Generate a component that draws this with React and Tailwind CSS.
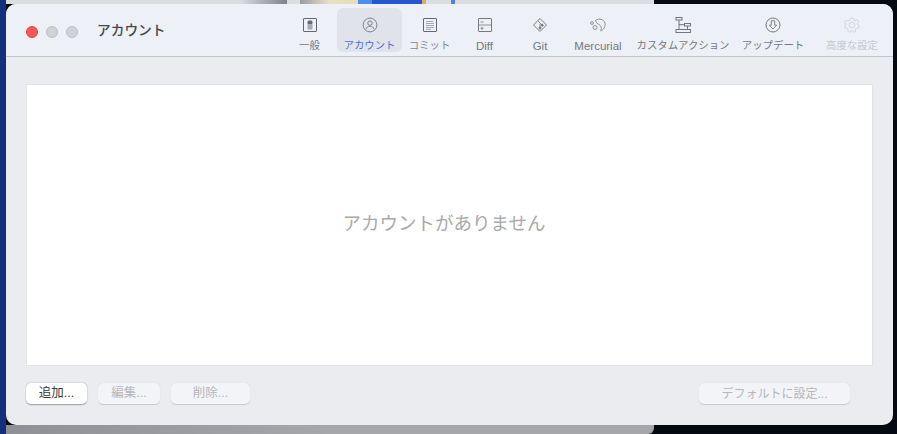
import React from "react";

const font = { fontFamily: '"Liberation Sans", "Noto Sans CJK JP", sans-serif' };

const GeneralIcon = () => (
  <svg width="16" height="16" viewBox="0 0 16 16" fill="none">
    <rect x="1.500" y="1.500" width="13" height="13" rx="0.5" stroke="#66686c" />
    <rect x="5.500" y="3.500" width="5" height="4" rx="1.500" fill="#66686c" />
    <rect x="5.500" y="7" width="5" height="5.500" rx="1" fill="#a8aaae" />
  </svg>
);

const AccountIcon = () => (
  <svg width="16" height="16" viewBox="0 0 16 16" fill="none" stroke="#77797e" strokeWidth="0.9">
    <circle cx="8" cy="8" r="6.900" />
    <circle cx="8" cy="6.200" r="2.200" />
    <path d="M4 12.200c.4-2 2-3 4-3s3.600 1 4 3" />
  </svg>
);

const CommitIcon = () => (
  <svg width="16" height="16" viewBox="0 0 16 16" fill="none">
    <rect x="1.500" y="1.500" width="13" height="13" rx="0.5" stroke="#66686c" />
    <path d="M4 4.500h7M4 6.500h8M4 8.500h8M4 10.500h8M4 12.300h5" stroke="#a8aaae" />
  </svg>
);

const DiffIcon = () => (
  <svg width="16" height="16" viewBox="0 0 16 16" fill="none" stroke="#77797e">
    <rect x="1.500" y="1.500" width="13" height="13" rx="0.5" />
    <path d="M1.500 8h13M3.500 5h3M3.500 11.300h3M5 9.800v3" strokeWidth="0.8" />
  </svg>
);

const GitIcon = () => (
  <svg width="16" height="16" viewBox="0 0 16 16" fill="none" stroke="#77797e">
    <path d="M8 1.500 14.500 8 8 14.500 1.500 8Z" strokeLinejoin="round" />
    <path d="M6 4l4.300 4.300M8 6.500v5" strokeWidth="0.8" />
    <circle cx="8" cy="11" r="1" fill="#77797e" />
    <circle cx="10.200" cy="8.200" r="1" fill="#77797e" />
  </svg>
);

const MercurialIcon = () => (
  <svg width="18" height="16" viewBox="0 0 18 16" fill="none" stroke="#85878c" strokeWidth="0.9">
    <path d="M6.500 3.500c3-2.500 8.500-1.500 9.500 2.500.7 3.200-1.300 6.800-4.300 8 .5-1.800 1-3.300 0-5-1-1.500-4.300-2-5.200-5.500Z" />
    <circle cx="3" cy="6" r="1.400" />
    <circle cx="6" cy="10.500" r="2" />
  </svg>
);

const CustomActionIcon = () => (
  <svg width="18" height="16" viewBox="0 0 18 16" fill="none" stroke="#66686c" strokeWidth="0.9">
    <rect x="2" y="0.500" width="6" height="2.500" />
    <rect x="10.500" y="6.500" width="6" height="2.500" />
    <rect x="2" y="12.500" width="14.500" height="3" />
    <path d="M5 3v9.500M5 7.700h5.500M13.500 9v3.500" />
  </svg>
);

const UpdateIcon = () => (
  <svg width="16" height="16" viewBox="0 0 16 16" fill="none" stroke="#77797e">
    <circle cx="8" cy="8" r="7" />
    <path d="M6.300 3.800h3.400v4.400h2L8 12 4.300 8.200h2Z" strokeLinejoin="round" strokeWidth="0.9" />
  </svg>
);

const AdvancedIcon = () => (
  <svg width="16" height="16" viewBox="0 0 16 16" fill="none" stroke="#cfd2d7" strokeWidth="0.9">
    <circle cx="8" cy="8" r="2.800" />
    <path d="M6.700 1h2.600l.4 2 1.500.7 1.800-1 1.600 2-1.200 1.600.4 1.600 1.500 1-.8 2.400-2 0-1.100 1.300.3 2-2.500.6-1-1.700H7.200l-1.200 1.700-2.300-1 .3-2-1.100-1.200-2 0L.2 9.700l1.500-1V7L.7 5.500l1.500-2.300 1.900.7 1.600-1Z" strokeLinejoin="round" />
  </svg>
);

const tabs = [
  { label: "一般", icon: <GeneralIcon />, w: "w-[57px] pl-[2px]", text: "text-[10.400px] text-[#75787d]" },
  { label: "アカウント", icon: <AccountIcon />, w: "w-[65px]", text: "text-[10.400px] text-[#4a6fd8]", active: true },
  { label: "コミット", icon: <CommitIcon />, w: "w-[55px]", text: "text-[10.400px] text-[#85888c]" },
  { label: "Diff", icon: <DiffIcon />, w: "w-[55px]", text: "text-[11.500px] text-[#75787d]" },
  { label: "Git", icon: <GitIcon />, w: "w-[56px]", text: "text-[11.500px] text-[#75787d]" },
  { label: "Mercurial", icon: <MercurialIcon />, w: "w-[60px]", text: "text-[11.500px] text-[#75787d]" },
  { label: "カスタムアクション", icon: <CustomActionIcon />, w: "w-[110px]", text: "text-[10.400px] text-[#75787d]" },
  { label: "アップデート", icon: <UpdateIcon />, w: "w-[70px]", text: "text-[10.400px] text-[#75787d]" },
  { label: "高度な設定", icon: <AdvancedIcon />, w: "w-[88px]", text: "text-[10.400px] text-[#c6c9ce]" },
];

const Tab = ({ tab }) => (
  <div
    className={`flex flex-col items-center h-[44px] pt-[9px] rounded-md ${tab.w} ${
      tab.active ? "bg-[#e0e4ea]" : ""
    }`}
  >
    <div className="h-[16px] flex items-center justify-center">{tab.icon}</div>
    <span className={`mt-[6px] leading-[14px] whitespace-nowrap ${tab.text}`}>
      {tab.label}
    </span>
  </div>
);

const Btn = ({ children, w, enabled }) => (
  <button
    className={`h-[21px] rounded-[5px] leading-none ${w} ${
      enabled
        ? "bg-white text-[#3a3a3c] shadow-[0_0.5px_1.500px_rgba(0,0,0,0.35)]"
        : "bg-[#f3f4f7] text-[#b5b6b9] shadow-[0_0.5px_1px_rgba(0,0,0,0.15)]"
    }`}
  >
    {children}
  </button>
);

export default function App() {
  return (
    <div className="relative w-[897px] h-[434px] overflow-hidden bg-[#050a10]" style={font}>
      {/* desktop behind the window */}
      <div className="absolute left-0 top-0 w-[6px] h-[434px] bg-[#14307a]" />
      <div className="absolute left-[6px] top-0 w-[648px] h-[4px] bg-[#dcdde0]" />
      <div className="absolute left-[240px] top-0 w-[47px] h-[4px] bg-gradient-to-r from-[#dcdde0] to-[#7f828c]" />
      <div className="absolute left-[300px] top-0 w-[58px] h-[4px] bg-gradient-to-r from-[#9a9ba0] via-[#e8e0c8] to-[#e8dcba]" />
      <div className="absolute left-[358px] top-0 w-[14px] h-[4px] bg-[#4f8cf0]" />
      <div className="absolute left-[372px] top-0 w-[50px] h-[4px] bg-[#2458d0]" />
      <div className="absolute left-[422px] top-0 w-[4px] h-[4px] bg-[#e0a860]" />
      <div className="absolute left-[451px] top-0 w-[4px] h-[4px] bg-[#4f7fe0]" />
      <div className="absolute left-[6px] top-[425px] w-[648px] h-[9px] rounded-br-[6px] bg-gradient-to-r from-[#8f9095] via-[#a6a7ab] to-[#a6a7ab]" />

      {/* window */}
      <div className="absolute left-[6px] top-[4px] w-[887px] h-[421px] rounded-[10px] overflow-hidden bg-[#ebecf0] flex flex-col">
        <div className="h-[53px] shrink-0 flex items-start bg-[#edf0f7] border-b border-[#c4c5ca]">
          <div className="flex items-center gap-[8px] pl-[20px] mt-[20px] w-[281px] shrink-0">
            <span className="w-[12px] h-[12px] rounded-full bg-[#fc5753] border-[0.5px] border-[#e0443e]" />
            <span className="w-[12px] h-[12px] rounded-full bg-[#d0d2d6] border-[0.5px] border-[#bcbec2]" />
            <span className="w-[12px] h-[12px] rounded-full bg-[#d0d2d6] border-[0.5px] border-[#bcbec2]" />
            <span className="ml-[11px] pb-[2px] text-[13.700px] leading-none font-medium text-[#45474b] whitespace-nowrap">
              アカウント
            </span>
          </div>
          <div className="flex mt-[4px] -ml-[7px]">
            {tabs.map((t) => (
              <Tab key={t.label} tab={t} />
            ))}
          </div>
        </div>

        <div className="flex-1 flex flex-col px-[20px] pt-[27px]">
          <div className="h-[282px] pb-[2px] pr-[11px] bg-white border border-[#e2e3e6] flex items-center justify-center">
            <span className="text-[18.500px] text-[#a9a9ab]">アカウントがありません</span>
          </div>
          <div className="flex items-center mt-[17px]">
            <div className="flex gap-[11px] text-[12.500px]">
              <Btn w="w-[61px]" enabled>
                追加...
              </Btn>
              <Btn w="w-[62px]">編集...</Btn>
              <Btn w="w-[79px]">削除...</Btn>
            </div>
            <div className="ml-auto mr-[23px] flex text-[12px]">
              <Btn w="w-[151px]">デフォルトに設定...</Btn>
            </div>
          </div>
        </div>
      </div>
    </div>
  );
}
